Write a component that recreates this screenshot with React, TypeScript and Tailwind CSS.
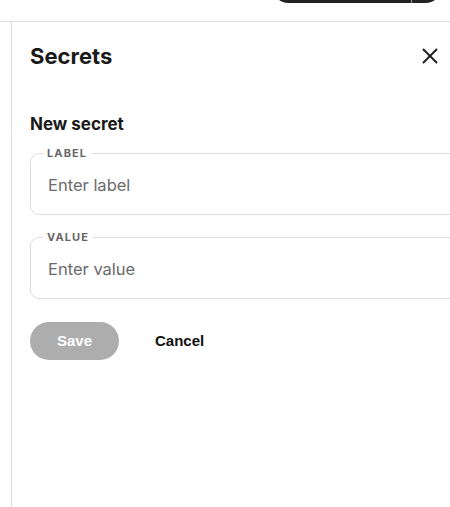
import { useState } from 'react';

function CloseIcon() {
  return (
    <svg width="16" height="16" viewBox="0 0 16 16" fill="none" stroke="#1f1f1f" strokeWidth="1.9" strokeLinecap="round">
      <path d="M1.5 1.5 L14.5 14.5" />
      <path d="M14.5 1.5 L1.5 14.5" />
    </svg>
  );
}

function Field({ legend, placeholder, value, onChange }: { legend: string; placeholder: string; value: string; onChange: (v: string) => void }) {
  return (
    <fieldset className="w-[440px] rounded-[9px] border border-[#dedede] px-3 pt-[12px] pb-[17px]">
      <legend className="px-1 text-[11px] leading-4 font-bold tracking-[0.1em] text-[#666666]">{legend}</legend>
      <input
        value={value}
        onChange={(e) => onChange(e.target.value)}
        placeholder={placeholder}
        className="block w-full px-[5px] text-[16.5px] leading-6 text-[#1f1f1f] placeholder:text-[#6b6b6b] outline-none bg-transparent"
      />
    </fieldset>
  );
}

export default function App() {
  const [label, setLabel] = useState('');
  const [value, setValue] = useState('');
  const canSave = label.trim() !== '' && value.trim() !== '';

  return (
    <div className="w-[450px] h-[507px] overflow-hidden bg-white font-['Inter','Liberation_Sans',sans-serif] flex flex-col">
      {/* top bar, scrolled so only the bottom of the toolbar pill shows */}
      <div className="h-[22px] shrink-0 border-b border-[#dddddd] flex justify-end items-start pr-[7px] overflow-hidden">
        <div className="-mt-[33px] h-[36px] w-[172px] rounded-full bg-[#222222] flex justify-end">
          <div className="w-px h-full bg-[#9a9a9a] mr-[31px]" />
        </div>
      </div>

      <div className="flex flex-1 min-h-0">
        <div className="w-[11px] shrink-0" />
        <div className="flex-1 min-w-0 border-l border-[#dddddd] pl-[18px] pt-[20px]">
          <div className="flex items-center justify-between pr-[12px]">
            <h1 className="text-[22px] leading-7 font-bold text-[#1a1a1a]">Secrets</h1>
            <button className="p-0">
              <CloseIcon />
            </button>
          </div>

          <h2 className="mt-[42px] text-[17px] leading-6 font-bold text-[#1a1a1a]">New secret</h2>

          <div className="mt-[9px] flex flex-col gap-[14px]">
            <Field legend="LABEL" placeholder="Enter label" value={label} onChange={setLabel} />
            <Field legend="VALUE" placeholder="Enter value" value={value} onChange={setValue} />
          </div>

          <div className="mt-[23px] flex items-center gap-[36px] font-['Liberation_Sans',Arial,sans-serif]">
            <button
              disabled={!canSave}
              className={`h-[38px] w-[89px] rounded-full text-[15px] font-bold text-white ${canSave ? 'bg-[#1f1f1f]' : 'bg-[#adadad]'}`}
            >
              Save
            </button>
            <button className="text-[15px] font-bold text-[#111111]">Cancel</button>
          </div>
        </div>
      </div>
    </div>
  );
}
